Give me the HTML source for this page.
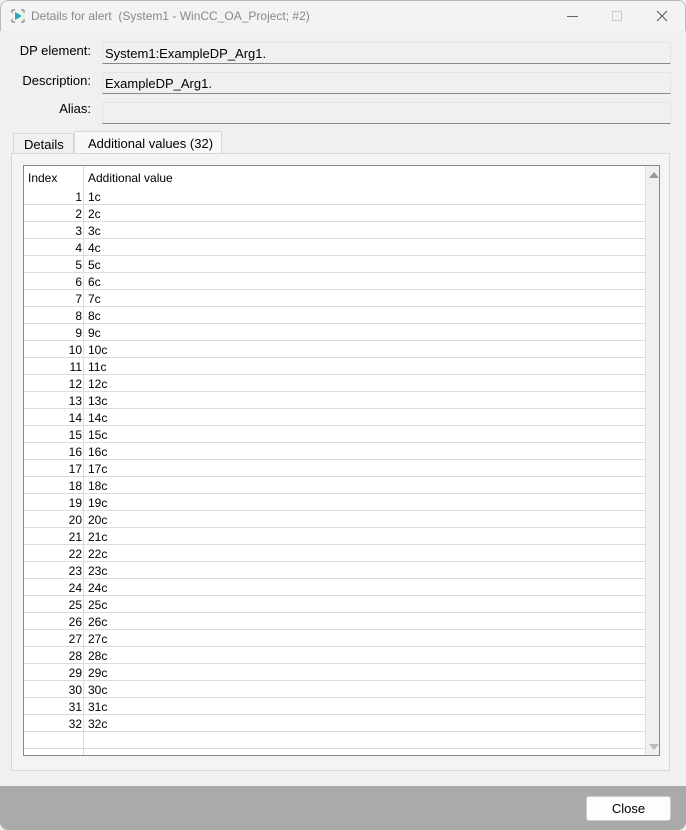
<!DOCTYPE html>
<html><head><style>
*{box-sizing:border-box;margin:0;padding:0}
body{width:686px;height:830px;background:#f0f0f0;font-family:"Liberation Sans",sans-serif;font-size:12px;color:#000;position:relative;overflow:hidden}
.abs{position:absolute}
.title{left:0;top:0;width:686px;height:31px;background:#f3f3f3;border:1px solid #bbb;border-bottom:none;border-radius:8px 8px 0 0}
.lbl{font-size:13px;text-align:right;width:90px;left:0}
.fld{left:102px;width:569px;height:22px;background:#f0f0f0;border:1px solid #e4e4e4;border-bottom:1px solid #888;font-size:13px;padding:3px 2px}
.row{position:absolute;left:0;width:622px;height:17px;border-bottom:1px solid #dcdcdc;font-size:12px}
.row .i{position:absolute;left:0;width:58px;text-align:right;top:2px}
.row .v{position:absolute;left:64px;top:2px}
</style></head><body>
<div class="abs title">
 <svg class="abs" style="left:10px;top:8px" width="14" height="14" viewBox="0 0 14 14"><path d="M1 1h3M1 1v3M13 1h-3M13 1v3M1 13h3M1 13v-3M13 13h-3M13 13v-3" stroke="#999" stroke-width="1.5" fill="none"/><path d="M4 3l7 4-7 4z" fill="#2aa8b8"/></svg>
 <div class="abs" style="left:30px;top:8px;font-size:12px;color:#888">Details for alert&nbsp; (System1 - WinCC_OA_Project; #2)</div>
 <div class="abs" style="left:566px;top:15px;width:11px;height:1px;background:#666"></div>
 <div class="abs" style="left:611px;top:10px;width:10px;height:10px;border:1px solid #ccc"></div>
 <svg class="abs" style="left:655px;top:9px" width="12" height="12"><path d="M1 1L11 11M11 1L1 11" stroke="#555" stroke-width="1"/></svg>
</div>
<div class="abs lbl" style="top:43px;width:91px">DP element:</div>
<div class="abs lbl" style="top:73px;width:91px">Description:</div>
<div class="abs lbl" style="top:101px;width:91px">Alias:</div>
<div class="abs fld" style="top:42px">System1:ExampleDP_Arg1.</div>
<div class="abs fld" style="top:72px">ExampleDP_Arg1.</div>
<div class="abs fld" style="top:102px"></div>
<div class="abs" style="left:13px;top:133px;width:61px;height:21px;border:1px solid #d8d8d8;border-bottom:none;background:#f0f0f0;font-size:13px;padding:3px 0 0 10px">Details</div>
<div class="abs" style="left:74px;top:131px;width:148px;height:23px;border:1px solid #d8d8d8;border-bottom:none;background:#f8f8f8;font-size:13px;padding:4px 0 0 13px">Additional values (32)</div>
<div class="abs" style="left:11px;top:153px;width:659px;height:618px;border:1px solid #d8d8d8;background:#f4f4f4"></div>
<div class="abs" style="left:23px;top:165px;width:637px;height:591px;border:1px solid #888;background:#fff;overflow:hidden">
 <div class="abs" style="left:59px;top:0;width:1px;height:591px;background:#dcdcdc"></div>
 <div class="abs" style="left:4px;top:5px;font-size:12px">Index</div>
 <div class="abs" style="left:64px;top:5px;font-size:12px">Additional value</div>
 <div class="abs" style="left:621px;top:0;width:15px;height:589px;background:#f0f0f0;border-left:1px solid #ddd"></div>
 <div class="abs" style="left:625px;top:6px;width:0;height:0;border-left:5px solid transparent;border-right:5px solid transparent;border-bottom:6px solid #999"></div>
 <div class="abs" style="left:625px;top:578px;width:0;height:0;border-left:5px solid transparent;border-right:5px solid transparent;border-top:6px solid #bbb"></div>
 <div style="position:absolute;left:0;top:22px;width:622px">
 <div class="row" style="top:0"><span class="i">1</span><span class="v">1c</span></div>
 <div class="row" style="top:17px"><span class="i">2</span><span class="v">2c</span></div>
 <div class="row" style="top:34px"><span class="i">3</span><span class="v">3c</span></div>
 <div class="row" style="top:51px"><span class="i">4</span><span class="v">4c</span></div>
 <div class="row" style="top:68px"><span class="i">5</span><span class="v">5c</span></div>
 <div class="row" style="top:85px"><span class="i">6</span><span class="v">6c</span></div>
 <div class="row" style="top:102px"><span class="i">7</span><span class="v">7c</span></div>
 <div class="row" style="top:119px"><span class="i">8</span><span class="v">8c</span></div>
 <div class="row" style="top:136px"><span class="i">9</span><span class="v">9c</span></div>
 <div class="row" style="top:153px"><span class="i">10</span><span class="v">10c</span></div>
 <div class="row" style="top:170px"><span class="i">11</span><span class="v">11c</span></div>
 <div class="row" style="top:187px"><span class="i">12</span><span class="v">12c</span></div>
 <div class="row" style="top:204px"><span class="i">13</span><span class="v">13c</span></div>
 <div class="row" style="top:221px"><span class="i">14</span><span class="v">14c</span></div>
 <div class="row" style="top:238px"><span class="i">15</span><span class="v">15c</span></div>
 <div class="row" style="top:255px"><span class="i">16</span><span class="v">16c</span></div>
 <div class="row" style="top:272px"><span class="i">17</span><span class="v">17c</span></div>
 <div class="row" style="top:289px"><span class="i">18</span><span class="v">18c</span></div>
 <div class="row" style="top:306px"><span class="i">19</span><span class="v">19c</span></div>
 <div class="row" style="top:323px"><span class="i">20</span><span class="v">20c</span></div>
 <div class="row" style="top:340px"><span class="i">21</span><span class="v">21c</span></div>
 <div class="row" style="top:357px"><span class="i">22</span><span class="v">22c</span></div>
 <div class="row" style="top:374px"><span class="i">23</span><span class="v">23c</span></div>
 <div class="row" style="top:391px"><span class="i">24</span><span class="v">24c</span></div>
 <div class="row" style="top:408px"><span class="i">25</span><span class="v">25c</span></div>
 <div class="row" style="top:425px"><span class="i">26</span><span class="v">26c</span></div>
 <div class="row" style="top:442px"><span class="i">27</span><span class="v">27c</span></div>
 <div class="row" style="top:459px"><span class="i">28</span><span class="v">28c</span></div>
 <div class="row" style="top:476px"><span class="i">29</span><span class="v">29c</span></div>
 <div class="row" style="top:493px"><span class="i">30</span><span class="v">30c</span></div>
 <div class="row" style="top:510px"><span class="i">31</span><span class="v">31c</span></div>
 <div class="row" style="top:527px"><span class="i">32</span><span class="v">32c</span></div>
 <div class="row" style="top:544px"></div>
 </div>
</div>
<div class="abs" style="left:0;top:786px;width:686px;height:44px;background:#aaa;border-radius:0 0 8px 8px"></div>
<div class="abs" style="left:586px;top:796px;width:85px;height:25px;background:#fdfdfd;border:1px solid #ccc;border-radius:3px;font-size:13px;text-align:center;padding-top:4px">Close</div>
</body></html>
